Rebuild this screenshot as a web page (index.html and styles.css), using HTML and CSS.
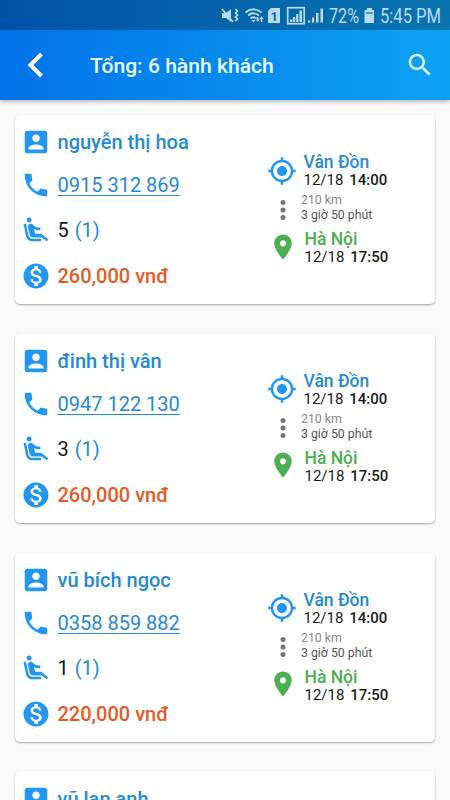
FILE: index.html
```html
<!DOCTYPE html>
<html lang="vi">
<head>
  <meta charset="UTF-8" />
  <meta name="viewport" content="width=device-width, initial-scale=1.0" />
  <title>Hành khách</title>
  <link rel="stylesheet" href="styles.css">
</head>
<body>
  <!-- Icons -->
  <svg class="sprite">
    <symbol id="person" viewBox="0 0 24 24"><path d="M3 5v14c0 1.100.890 2 2 2h14c1.100 0 2-.900 2-2V5c0-1.100-.900-2-2-2H5c-1.110 0-2 .900-2 2zm12 4c0 1.660-1.340 3-3 3s-3-1.340-3-3 1.340-3 3-3 3 1.340 3 3zm-9 8c0-2 4-3.100 6-3.100s6 1.100 6 3.100v1H6v-1z"/></symbol>
    <symbol id="phone" viewBox="0 0 24 24"><path d="M6.620 10.790c1.440 2.830 3.760 5.140 6.590 6.590l2.200-2.200c.270-.270.670-.360 1.020-.240 1.120.370 2.330.570 3.570.570.550 0 1 .450 1 1V20c0 .550-.450 1-1 1-9.390 0-17-7.610-17-17 0-.550.450-1 1-1h3.500c.550 0 1 .450 1 1 0 1.250.200 2.450.570 3.570.110.350.030.740-.250 1.020l-2.200 2.200z"/></symbol>
    <symbol id="seat" viewBox="0 0 24 24"><path d="M5.350 5.640c-.900-.640-1.120-1.880-.490-2.790.630-.900 1.880-1.120 2.790-.490.900.640 1.120 1.880.490 2.790-.640.900-1.880 1.120-2.790.490zM16 19H8.930c-1.480 0-2.740-1.080-2.960-2.540L4 7H2l1.990 9.760C4.370 19.200 6.470 21 8.940 21H16v-2zm.230-4h-4.880l-1.030-4.100c1.580.890 3.280 1.540 5.150 1.220V9.990c-1.630.310-3.440-.270-4.690-1.250L9.140 7.470c-.230-.180-.490-.300-.760-.380-.320-.090-.660-.120-.990-.060h-.020c-1.230.220-2.050 1.390-1.840 2.610l1.350 5.920C7.160 16.980 8.390 18 9.830 18h6.850l3.820 3 1.500-1.500-5.770-4.500z"/></symbol>
    <symbol id="money" viewBox="0 0 24 24"><path d="M12 2C6.480 2 2 6.480 2 12s4.480 10 10 10 10-4.480 10-10S17.520 2 12 2zm1.410 16.090V20h-2.670v-1.930c-1.710-.360-3.160-1.460-3.270-3.400h1.960c.100 1.050.820 1.870 2.650 1.870 1.960 0 2.400-.980 2.400-1.590 0-.830-.440-1.610-2.670-2.140-2.480-.600-4.180-1.620-4.180-3.670 0-1.720 1.390-2.840 3.110-3.210V4h2.670v1.950c1.860.450 2.790 1.860 2.850 3.390H14.300c-.050-1.110-.640-1.870-2.220-1.870-1.500 0-2.400.680-2.400 1.640 0 .840.650 1.390 2.670 1.910s4.180 1.390 4.180 3.910c-.010 1.830-1.380 2.830-3.120 3.160z"/></symbol>
    <symbol id="gps" viewBox="0 0 24 24"><path d="M12 8c-2.210 0-4 1.790-4 4s1.790 4 4 4 4-1.790 4-4-1.790-4-4-4zm8.940 3c-.460-4.170-3.770-7.480-7.940-7.940V1h-2v2.060C6.830 3.520 3.520 6.830 3.060 11H1v2h2.060c.460 4.170 3.770 7.480 7.940 7.940V23h2v-2.060c4.170-.460 7.480-3.770 7.940-7.940H23v-2h-2.060zM12 19c-3.870 0-7-3.130-7-7s3.130-7 7-7 7 3.130 7 7-3.130 7-7 7z"/></symbol>
    <symbol id="dots" viewBox="0 0 24 24"><circle cx="12" cy="6" r="2"/><circle cx="12" cy="12" r="2"/><circle cx="12" cy="18" r="2"/></symbol>
    <symbol id="pin" viewBox="0 0 24 24"><path d="M12 2C8.130 2 5 5.130 5 9c0 5.250 7 13 7 13s7-7.750 7-13c0-3.870-3.130-7-7-7zm0 9.500c-1.380 0-2.500-1.120-2.500-2.500s1.120-2.500 2.500-2.500 2.500 1.120 2.500 2.500-1.120 2.500-2.500 2.500z"/></symbol>
  </svg>

  <header class="header">
    <div class="status-bar">
      <svg class="status-icons" viewBox="0 0 240 30" width="240" height="30">
        <!-- muted, vibrate -->
        <path d="M12 13h4l5-4v13l-5-4h-4z"/>
        <path class="line" d="M12 9l11 13M25.500 9l2 2-2 2 2 2-2 2 2 2-2 2"/>
        <!-- wifi -->
        <path class="line" d="M35.500 12.500q8-6.500 16 0M38 15.500q5.500-4.500 11 0M40.500 18.500q3-2.500 6 0"/>
        <path d="M41.500 20h4l-2 2.500zM46 19.500h1v-2.500h1.500v2.500h1l-1.750 2.500zM49.500 19l2-2.800 2 2.800h-1.200v3h-1.500v-3z"/>
        <!-- sim -->
        <path d="M61 8h9v15H58V11z"/>
        <text class="sim" x="60.500" y="20.500">1</text>
        <!-- signal -->
        <rect class="line" x="77.700" y="7.700" width="16.500" height="16"/>
        <path d="M80 19.500h2.200V22H80zM83 17h2.200v5H83zM86.200 14h2.200v8h-2.200zM89.500 10.500H92V22h-2.500z"/>
        <path d="M98 20.500h2.200v2H98zM102 17.500h2.200v5H102zM106 13h2.500v9.500H106zM110.500 8.500h2.500v14h-2.500z"/>
        <text x="119" y="22.500" textLength="30" lengthAdjust="spacingAndGlyphs">72%</text>
        <!-- battery -->
        <path d="M157 8h5v2h2v13h-9.500V10h2.500z"/>
        <path class="gap" d="M156 12h6.500v2H156z"/>
        <text x="170" y="22.500" textLength="61" lengthAdjust="spacingAndGlyphs">5:45 PM</text>
      </svg>
    </div>
    <div class="toolbar">
      <svg class="back" viewBox="0 0 18 26"><path d="M14.500 2L3.500 13l11 11"/></svg>
      <h1>Tổng: 6 hành khách</h1>
      <svg class="search" viewBox="0 0 24 24"><path d="M15.500 14h-.790l-.280-.270C15.410 12.590 16 11.110 16 9.500 16 5.910 13.090 3 9.500 3S3 5.910 3 9.500 5.910 16 9.500 16c1.610 0 3.090-.590 4.230-1.570l.270.280v.790l5 4.990L20.490 19l-4.990-5zm-6 0C7.010 14 5 11.990 5 9.500S7.010 5 9.500 5 14 7.010 14 9.500 11.990 14 9.500 14z"/></svg>
    </div>
  </header>

  <main class="list" id="passenger-list"></main>

  <script>
    const passengers = [
      { name: 'nguyễn thị hoa', phone: '0915 312 869', seats: 5, price: '260,000' },
      { name: 'đinh thị vân', phone: '0947 122 130', seats: 3, price: '260,000' },
      { name: 'vũ bích ngọc', phone: '0358 859 882', seats: 1, price: '220,000' },
      { name: 'vũ lan anh' }
    ];

    const icon = (name) => `<svg class="icon icon-${name}"><use href="#${name}"/></svg>`;
    const list = document.getElementById('passenger-list');

    passengers.forEach(p => {
      const card = document.createElement('section');
      card.classList.add('card');
      card.innerHTML = `
        <div class="info">
          <div class="row name">${icon('person')}<span>${p.name}</span></div>
          ${p.phone ? `
          <div class="row phone">${icon('phone')}<a href="tel:${p.phone.replaceAll(' ', '')}">${p.phone}</a></div>
          <div class="row seats">${icon('seat')}<span>${p.seats}</span><span class="count">(1)</span></div>
          <div class="row price">${icon('money')}<span>${p.price} vnđ</span></div>` : ''}
        </div>
        ${p.phone ? `
        <div class="trip">
          <div class="stop from">${icon('gps')}
            <div><div class="place">Vân Đồn</div><div class="time">12/18 <b>14:00</b></div></div>
          </div>
          <div class="stop via">${icon('dots')}
            <div><div class="distance">210 km</div><div class="duration">3 giờ 50 phút</div></div>
          </div>
          <div class="stop to">${icon('pin')}
            <div><div class="place">Hà Nội</div><div class="time">12/18 <b>17:50</b></div></div>
          </div>
        </div>` : ''}`;
      list.appendChild(card);
    });
  </script>
</body>
</html>
```
FILE: styles.css
```css
* {
  box-sizing: border-box;
}

body {
  margin: 0;
  height: 800px;
  overflow: hidden;
  background: #fafafa;
  font-family: Roboto, "Liberation Sans", sans-serif;
  color: #1a1a1a;
}

.sprite {
  display: none;
}

.header {
  height: 100px;
  background: linear-gradient(to right, #0272e8, #0ca3f3);
  box-shadow: 0 1px 5px rgba(0, 0, 0, 0.35);
}

.status-bar {
  display: flex;
  justify-content: flex-end;
  height: 30px;
  background: rgba(0, 0, 0, 0.28);
}

.status-icons {
  fill: #b9dcf2;
  font-size: 20px;
}

.status-icons .line {
  fill: none;
  stroke: #b9dcf2;
  stroke-width: 1.7;
}

.status-icons .sim {
  fill: #0867ac;
  font-size: 13px;
  font-weight: 700;
}

.status-icons .gap {
  fill: #4b91c4;
}

.toolbar {
  display: flex;
  align-items: center;
  height: 70px;
  padding: 0 15px 0 27px;
}

.back {
  width: 18px;
  height: 26px;
  fill: none;
  stroke: #fff;
  stroke-width: 4;
}

h1 {
  flex: 1;
  margin: 0 0 0 45px;
  font-size: 21.1px;
  font-weight: 500;
  color: #e8fbff;
}

.search {
  width: 30px;
  height: 30px;
  fill: #e0faff;
}

.list {
  display: flex;
  flex-direction: column;
  gap: 29.8px;
  padding: 115px 15px 0;
  margin-top: -100px;
}

.card {
  display: flex;
  flex-shrink: 0;
  height: 189px;
  padding: 6px 0 0 6px;
  background: #fff;
  border-radius: 5px;
  box-shadow: 0 1px 2px rgba(0, 0, 0, 0.35);
}

.info {
  display: grid;
  grid-template-rows: 42.5px 43px 47.5px 44.5px;
  width: 246px;
}

.row {
  display: flex;
  align-items: center;
  font-size: 20px;
}

.icon {
  flex: none;
  width: 30px;
  height: 30px;
  fill: #2196f3;
}

.row .icon {
  margin-right: 6.5px;
}

.name {
  font-weight: 500;
  color: #2589d5;
}

.phone a {
  color: #2589d5;
  text-decoration-thickness: 1px;
  text-underline-offset: 3px;
}

.count {
  margin-left: 6px;
  color: #2589d5;
}

.price {
  font-weight: 500;
  color: #e65a26;
}

.trip {
  padding-top: 31px;
}

.stop {
  display: flex;
}

.stop .icon {
  margin-right: 6.5px;
}

.from {
  height: 40px;
}

.from .icon {
  margin-top: 3.5px;
}

.via {
  height: 37px;
  padding-left: 1px;
  padding-top: 1px;
  font-size: 12.3px;
  line-height: 15px;
}

.via .icon {
  margin: 1.5px 3px 0 0;
  fill: #757575;
}

.to {
  padding-left: 1px;
}

.to .icon {
  margin-top: 2.5px;
  fill: #4caf50;
}

.place {
  font-size: 17.5px;
  font-weight: 500;
  line-height: 20px;
  color: #2589d5;
}

.to .place {
  color: #4caf50;
}

.time {
  font-size: 15px;
  line-height: 17px;
}

.time b {
  margin-left: 2px;
  font-weight: 500;
}

.distance {
  color: #888;
}

.duration {
  color: #555;
}
```
